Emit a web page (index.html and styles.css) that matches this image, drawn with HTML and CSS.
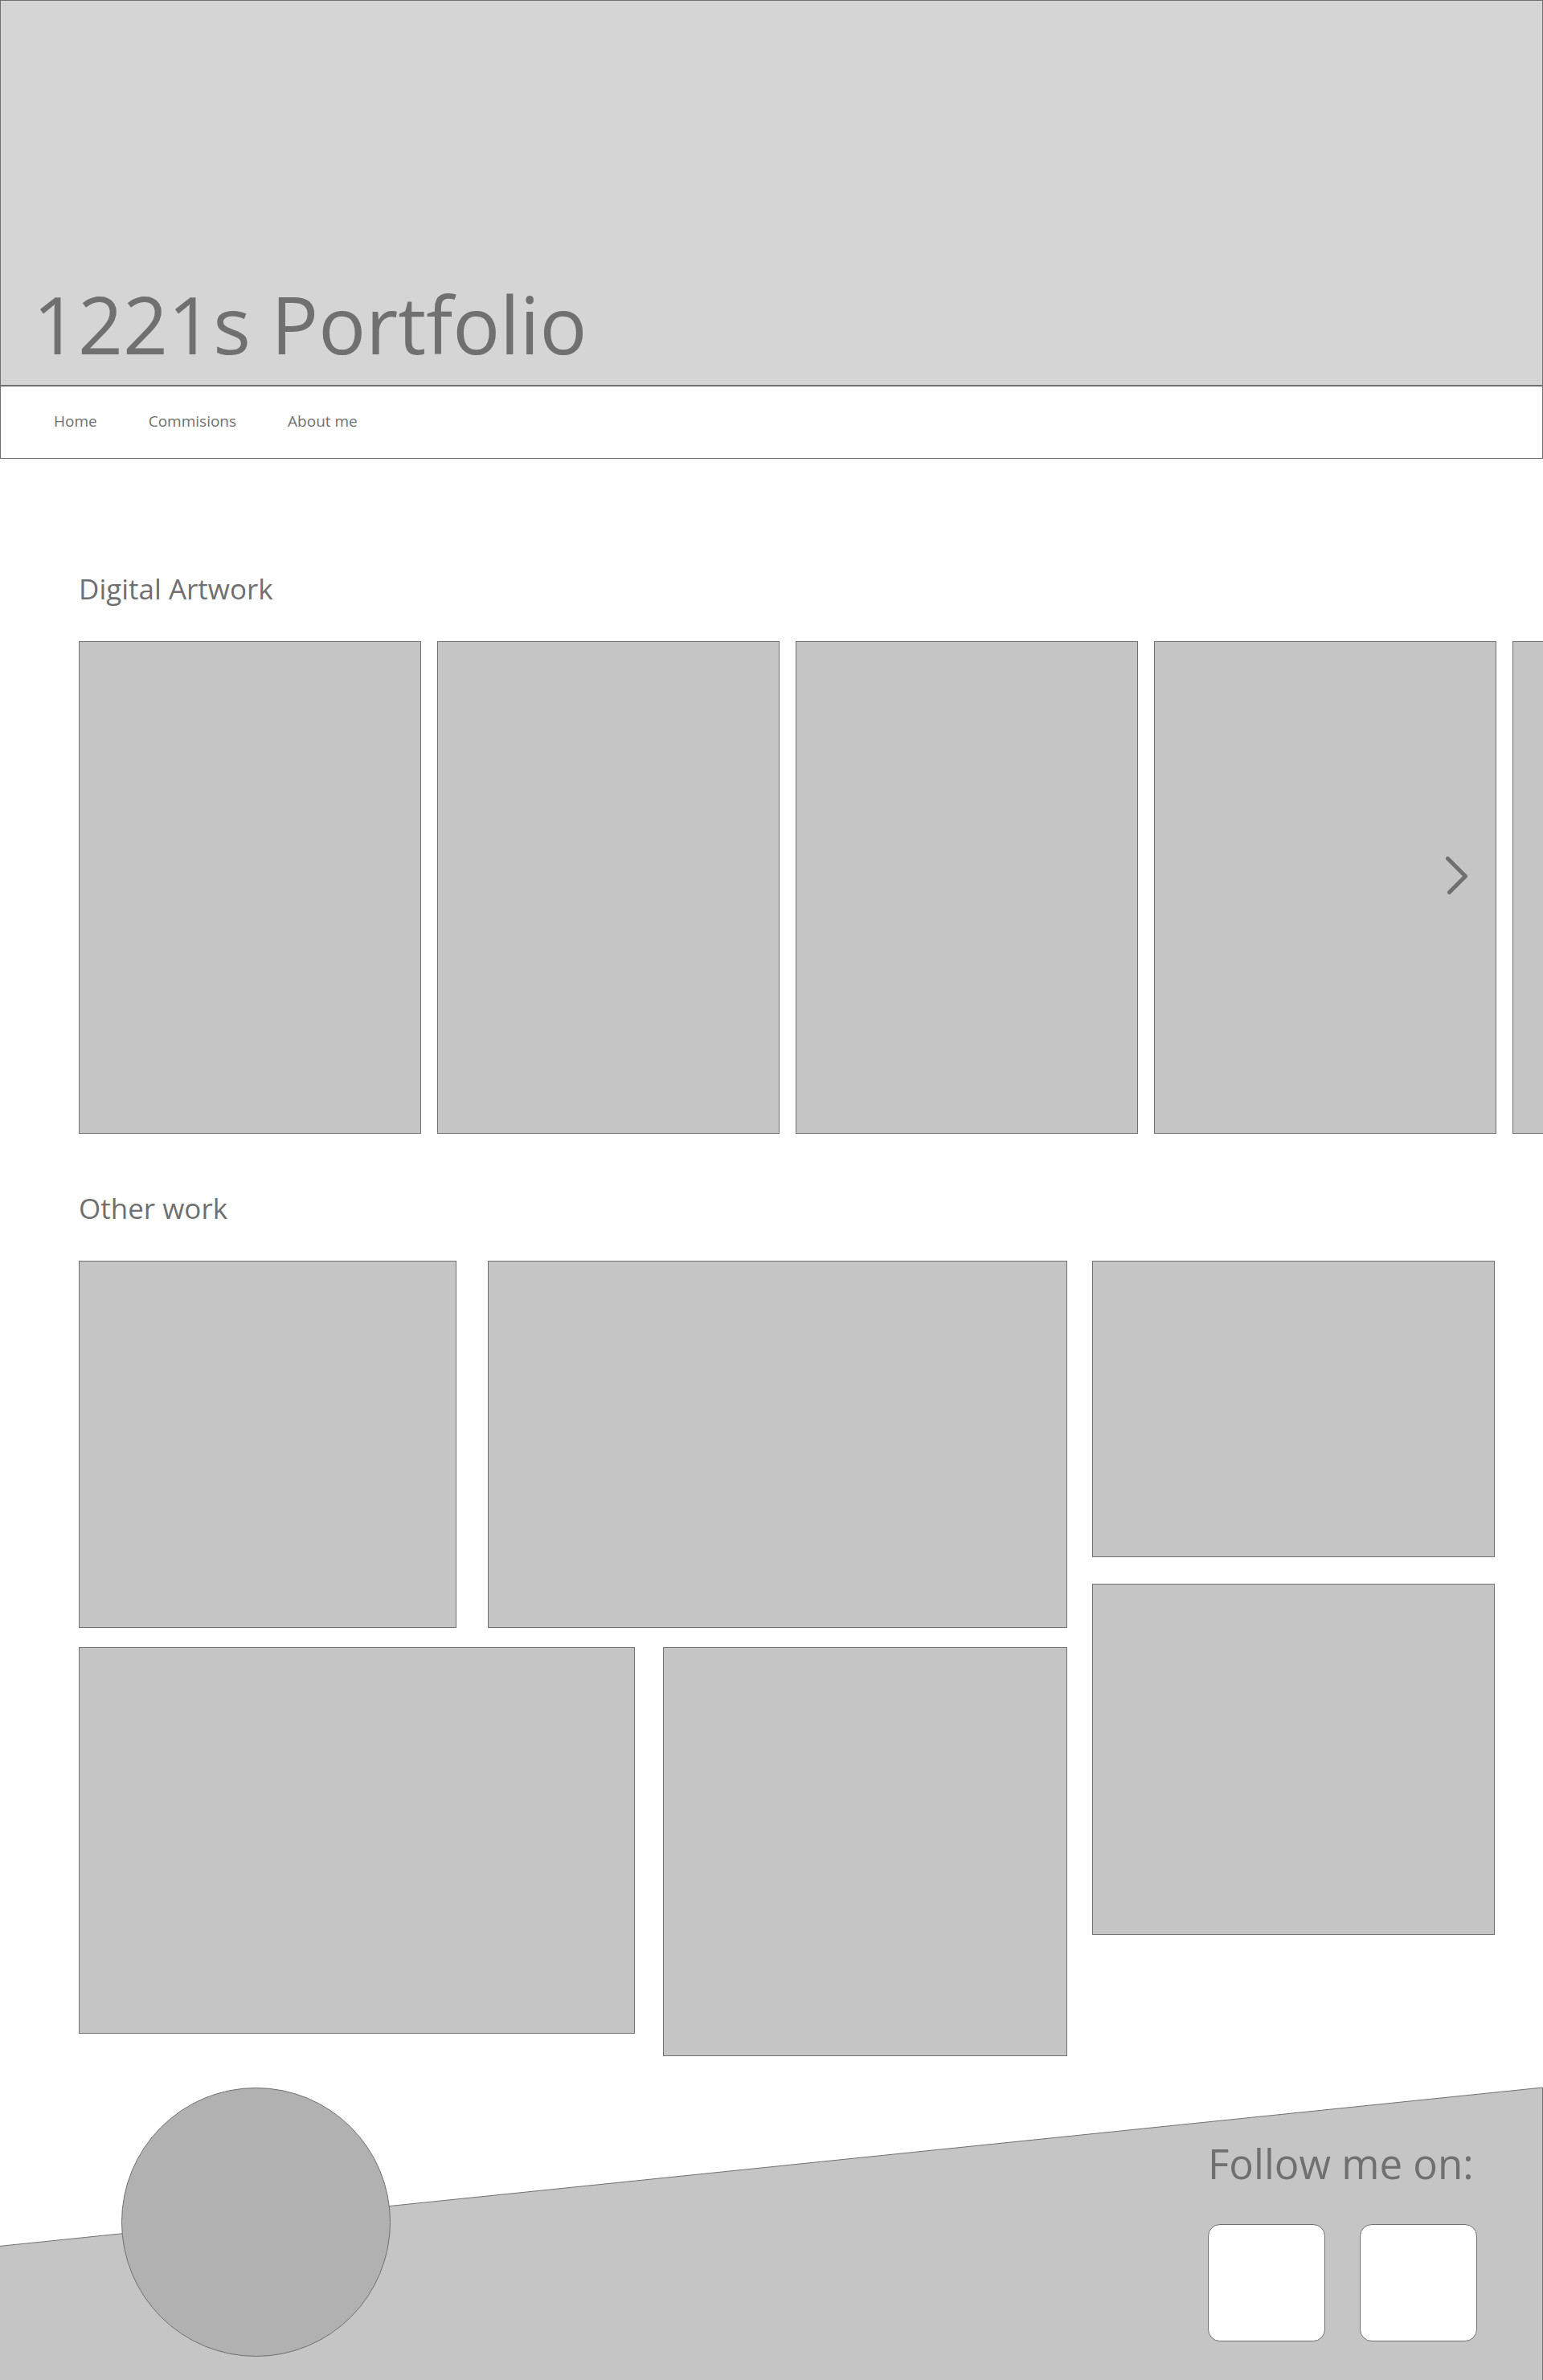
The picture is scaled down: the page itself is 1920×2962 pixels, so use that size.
FILE: index.html
```html
<!DOCTYPE html>
<html lang="en">
<head>
  <meta charset="utf-8">
  <meta name="viewport" content="width=device-width, initial-scale=1">
  <title>1221s Portfolio</title>
  <link rel="stylesheet" href="styles.css">
</head>
<body>
  <header class="hero">
    <h1 class="hero-title">1221s Portfolio</h1>
  </header>
  <nav class="nav">
    <a class="nav-link" href="#home">Home</a>
    <a class="nav-link" href="#commisions">Commisions</a>
    <a class="nav-link" href="#about">About me</a>
  </nav>

  <main class="main">
    <section class="section">
      <h2 class="section-title">Digital Artwork</h2>
      <div class="carousel">
        <div class="track">
          <div class="tile slide"></div>
          <div class="tile slide"></div>
          <div class="tile slide"></div>
          <div class="tile slide"></div>
          <div class="tile slide"></div>
        </div>
        <button class="next" type="button" aria-label="Next">
          <svg class="next-icon" viewBox="0 0 28 48" aria-hidden="true">
            <path d="M2.500 2.500L24.500 24.500L4.500 44.500" fill="none" stroke="#707070" stroke-width="5" stroke-linecap="round" stroke-linejoin="round"/>
          </svg>
        </button>
      </div>
    </section>

    <section class="section section-other">
      <h2 class="section-title">Other work</h2>
      <div class="gallery">
        <div class="gallery-wide">
          <div class="row row-top">
            <div class="tile"></div>
            <div class="tile"></div>
          </div>
          <div class="row row-bottom">
            <div class="tile medium"></div>
            <div class="tile tall"></div>
          </div>
        </div>
        <div class="gallery-side">
          <div class="tile side-short"></div>
          <div class="tile side-long"></div>
        </div>
      </div>
    </section>
  </main>

  <footer class="footer">
    <svg class="slope" viewBox="0 0 1920 365" preserveAspectRatio="none" aria-hidden="true">
      <path d="M-1 198.500L1919.500 1V366H-1Z" fill="#c5c5c5" stroke="#707070" vector-effect="non-scaling-stroke"/>
    </svg>
    <div class="avatar"></div>
    <div class="follow">
      <h2 class="follow-title">Follow me on:</h2>
      <div class="socials">
        <a class="social" href="#social-1" aria-label="First profile"></a>
        <a class="social" href="#social-2" aria-label="Second profile"></a>
      </div>
    </div>
  </footer>
</body>
</html>
```

FILE: styles.css
```css
* {
  box-sizing: border-box;
}

body {
  margin: 0;
  background: #fff;
  color: #707070;
  font-family: "Open Sans", "Noto Sans", sans-serif;
}

h1,
h2 {
  margin: 0;
  font-weight: 400;
}

.hero {
  display: flex;
  align-items: flex-end;
  min-height: 480px;
  padding: 0 40px 16px;
  border: 1px solid #707070;
  background: #d5d5d5;
}

.hero-title {
  font-size: 98px;
  line-height: 120px;
}

.nav {
  display: flex;
  gap: 64px;
  padding: 31px 66px 34px;
  border: 1px solid #707070;
}

.nav-link {
  color: inherit;
  font-size: 19px;
  line-height: 24px;
  text-decoration: none;
}

.main {
  padding: 138px 0 38px 98px;
  overflow: hidden;
}

.section-title {
  margin-bottom: 41px;
  font-size: 35px;
  line-height: 48px;
}

.section-other {
  margin-top: 69px;
  padding-right: 60px;
}

.tile {
  border: 1px solid #707070;
  background: #c5c5c5;
}

.carousel {
  position: relative;
}

.track {
  display: flex;
  gap: 20px;
  overflow: hidden;
}

.slide {
  flex: 0 0 426px;
  height: 613px;
}

.next {
  position: absolute;
  top: 268px;
  right: 93px;
  padding: 0;
  border: 0;
  background: none;
  cursor: pointer;
}

.next-icon {
  display: block;
  width: 28px;
  height: 48px;
}

.gallery {
  display: grid;
  grid-template-columns: 1230fr 501fr;
  gap: 31px;
}

.gallery-wide {
  display: grid;
  align-content: start;
  gap: 24px;
}

.row {
  display: grid;
  align-items: start;
}

.row-top {
  grid-template-columns: 470fr 721fr;
  gap: 39px;
}

.row-top .tile {
  height: 457px;
}

.row-bottom {
  grid-template-columns: 692fr 503fr;
  gap: 35px;
}

.medium {
  height: 481px;
}

.tall {
  height: 509px;
}

.gallery-side {
  display: grid;
  align-content: start;
  gap: 33px;
}

.side-short {
  height: 369px;
}

.side-long {
  height: 437px;
}

.footer {
  position: relative;
  display: flex;
  justify-content: space-between;
  align-items: flex-start;
  min-height: 365px;
  padding: 1px 82px 29px 151px;
}

/* Slanted backdrop behind the footer content */
.slope {
  position: absolute;
  inset: 0;
  width: 100%;
  height: 100%;
}

.avatar {
  position: relative;
  width: 335px;
  height: 335px;
  border: 1px solid #707070;
  border-radius: 50%;
  background: #b1b1b1;
}

.follow {
  position: relative;
  padding-top: 58px;
}

.follow-title {
  margin-bottom: 40px;
  font-size: 51px;
  line-height: 72px;
}

.socials {
  display: flex;
  gap: 43px;
}

.social {
  width: 146px;
  height: 146px;
  border: 1px solid #707070;
  border-radius: 15px;
  background: #fff;
}
```
